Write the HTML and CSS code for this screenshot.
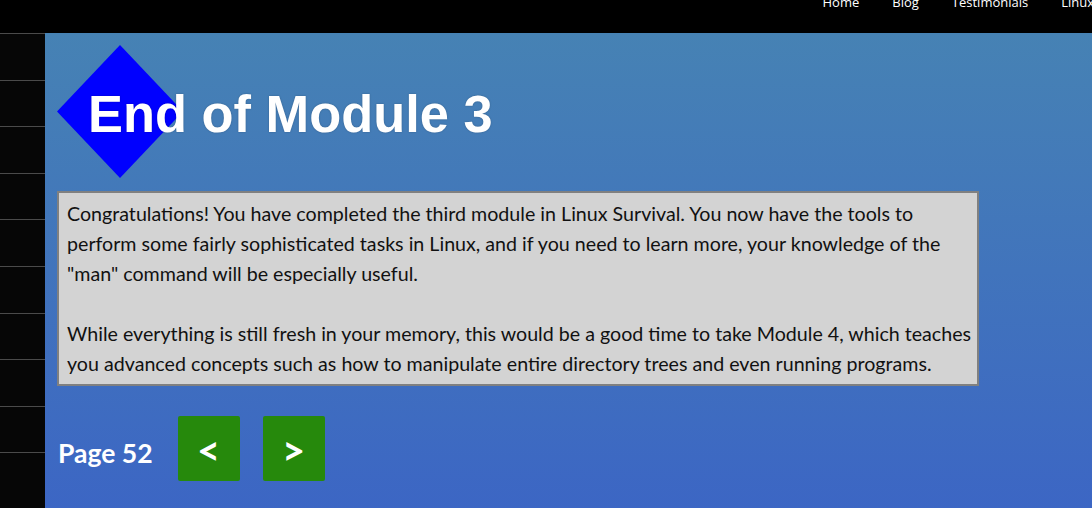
FILE: index.html
```html
<!DOCTYPE html>
<html lang="en">
<head>
<meta charset="utf-8">
<title>End of Module 3</title>
<link rel="stylesheet" href="styles.css">
</head>
<body>
<header class="topbar">
  <nav class="topnav">
    <a href="#">Home</a>
    <a href="#">Blog</a>
    <a href="#">Testimonials</a>
    <a href="#">Linux</a>
  </nav>
</header>
<div class="layout">
  <aside class="sidebar">
    <ul class="side-list">
      <li></li><li></li><li></li><li></li><li></li>
      <li></li><li></li><li></li><li></li><li></li>
    </ul>
  </aside>
  <main class="content">
    <div class="heading">
      <svg class="diamond" width="126" height="133" viewBox="0 0 126 133" aria-hidden="true">
        <polygon points="63,0 126,66.5 63,133 0,66.5" fill="#0000ff"/>
      </svg>
      <h1 class="title">End of Module 3</h1>
    </div>
    <div class="textbox">
      Congratulations! You have completed the third module in Linux Survival. You now have the tools to perform some fairly sophisticated tasks in Linux, and if you need to learn more, your knowledge of the "man" command will be especially useful.<br><br>While everything is still fresh in your memory, this would be a good time to take Module 4, which teaches you advanced concepts such as how to manipulate entire directory trees and even running programs.
    </div>
    <div class="pager">
      <span class="page-label">Page 52</span>
      <a class="page-btn" href="#">&lt;</a>
      <a class="page-btn" href="#">&gt;</a>
    </div>
  </main>
</div>
</body>
</html>
```
FILE: styles.css
```css
html, body {
  margin: 0;
  padding: 0;
  height: 100%;
  overflow: hidden;
  background: #000;
}
body {
  font-family: "Lato", "Open Sans", sans-serif;
}
.topbar {
  height: 33px;
  background: #000;
  overflow: hidden;
}
.topnav {
  display: flex;
  white-space: nowrap;
  padding-left: 806px;
  margin-top: -7px;
}
.topnav a {
  color: #fff;
  text-decoration: none;
  font-family: "Open Sans", sans-serif;
  font-size: 13px;
  line-height: 18px;
  padding: 0 16.5px;
}
.layout {
  display: flex;
  height: calc(100% - 33px);
}
.sidebar {
  width: 45px;
  flex: none;
  background: #060606;
}
.side-list {
  list-style: none;
  margin: 0;
  padding: 0;
}
.side-list li {
  box-sizing: border-box;
  height: 46.6px;
  border-top: 1px solid #4a4a4a;
}
.content {
  flex: 1;
  background: linear-gradient(#4682b4, #3c66c4);
  padding-left: 12px;
}
.heading {
  position: relative;
  height: 158px;
  box-sizing: border-box;
  padding-top: 51px;
}
.diamond {
  position: absolute;
  left: 0;
  top: 12px;
}
.title {
  position: relative;
  margin: 0;
  padding-left: 31px;
  font-family: "Liberation Sans", Arial, sans-serif;
  font-weight: bold;
  font-size: 52.4px;
  line-height: 60px;
  color: #fff;
  text-shadow: 0 0 2px rgba(0, 0, 0, 0.25);
}
.textbox {
  box-sizing: border-box;
  width: 922px;
  background: #d3d3d3;
  border: 2px solid #808080;
  padding: 6px 1px 5px 8px;
  font-size: 19.65px;
  line-height: 30px;
  color: #111;
}
.pager {
  display: flex;
  align-items: center;
  margin-top: 30px;
}
.page-label {
  color: #fff;
  font-weight: bold;
  font-size: 26.5px;
  padding: 8px 25px 0 1px;
}
.page-btn {
  display: block;
  width: 62px;
  height: 65px;
  margin-right: 23px;
  border-radius: 2px;
  background: #26890c;
  color: #fff;
  text-align: center;
  text-decoration: none;
  font-weight: bold;
  font-size: 40px;
  line-height: 68px;
}
```
